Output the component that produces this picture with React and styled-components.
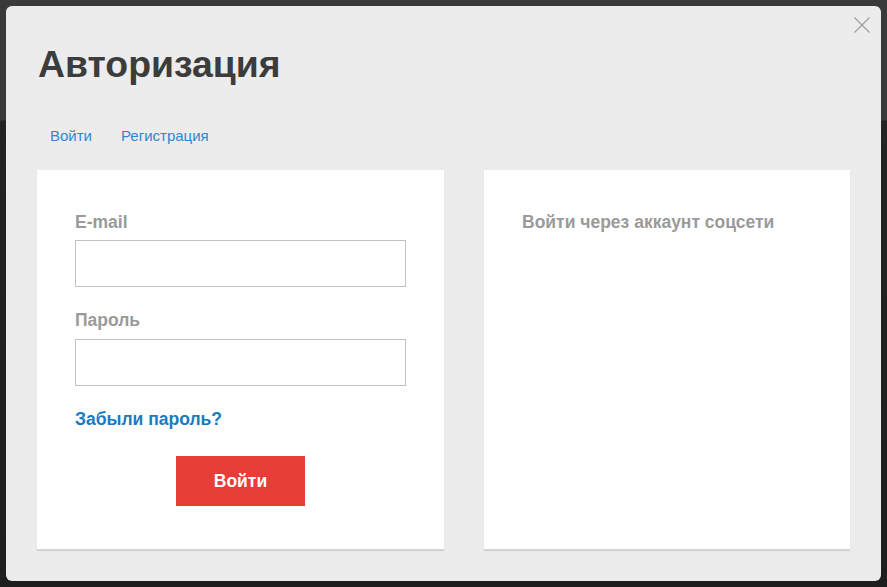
import React from "react";
import styled, { createGlobalStyle } from "styled-components";

const Global = createGlobalStyle`
  html, body { margin: 0; padding: 0; }
  body { font-family: "Liberation Sans", Arial, sans-serif; }
  * { box-sizing: border-box; }
`;

const Backdrop = styled.div`
  width: 887px;
  height: 587px;
  padding: 6px;
  background: linear-gradient(
    to bottom,
    #3a3a3a 0px,
    #3a3a3a 120px,
    #232323 121px,
    #1e1e1e 100%
  );
  overflow: hidden;
`;

const Modal = styled.div`
  position: relative;
  width: 875px;
  height: 575px;
  background: #ececec;
  border-radius: 6px;
  padding: 38px 31px 32px;
  display: flex;
  flex-direction: column;
`;

const Close = styled.button`
  position: absolute;
  top: 4px;
  right: 4px;
  width: 30px;
  height: 30px;
  border: 0;
  padding: 0;
  background: transparent;
  display: flex;
  align-items: center;
  justify-content: center;
  cursor: pointer;
`;

const Title = styled.h1`
  margin: 0 0 0 1px;
  font-size: 37.4px;
  line-height: 40px;
  font-weight: 700;
  color: #3c3c3c;
`;

const Tabs = styled.nav`
  display: flex;
  gap: 29px;
  margin: 43px 0 25px 13px;
`;

const Tab = styled.a`
  font-size: 15px;
  line-height: 18px;
  color: #2f87d1;
  text-decoration: none;
  cursor: pointer;
`;

const Cards = styled.div`
  display: flex;
  gap: 40px;
  align-items: stretch;
`;

const Card = styled.div`
  width: ${(p) => p.$w}px;
  background: #fff;
  box-shadow: 0 2px 1px rgba(0, 0, 0, 0.1);
  padding: 42px 38px 43px;
  display: flex;
  flex-direction: column;
`;

const Label = styled.label`
  font-size: 17.5px;
  line-height: 20px;
  font-weight: 700;
  color: #9a9a9a;
  margin-bottom: ${(p) => p.$mb || 8}px;
`;

const Input = styled.input`
  width: 331px;
  height: 47px;
  border: 1px solid #c2c2c2;
  background: #fff;
  margin: 0;
  padding: 0 10px;
  font: inherit;
  font-size: 15px;
  outline: none;
  margin-bottom: ${(p) => p.$mb || 0}px;
`;

const Forgot = styled.a`
  font-size: 17.5px;
  line-height: 20px;
  font-weight: 700;
  color: #1a7ac2;
  text-decoration: none;
  margin-bottom: 27px;
  align-self: flex-start;
`;

const Submit = styled.button`
  align-self: center;
  width: 129px;
  height: 50px;
  border: 0;
  background: #e83c38;
  color: #fff;
  font-family: inherit;
  font-size: 17.5px;
  font-weight: 700;
  cursor: pointer;
`;

const SocialTitle = styled.div`
  font-size: 17.5px;
  line-height: 20px;
  font-weight: 700;
  color: #9a9a9a;
`;

export default function App() {
  return (
    <>
      <Global />
      <Backdrop>
        <Modal>
          <Close aria-label="Закрыть">
            <svg width="16" height="16" viewBox="0 0 16 16">
              <path d="M0.5 0.5 L15.5 15.5 M15.5 0.5 L0.5 15.5" stroke="#9c9c9c" strokeWidth="1.1" fill="none" />
            </svg>
          </Close>
          <Title>Авторизация</Title>
          <Tabs>
            <Tab>Войти</Tab>
            <Tab>Регистрация</Tab>
          </Tabs>
          <Cards>
            <Card $w={407}>
              <Label>E-mail</Label>
              <Input type="text" $mb={23} />
              <Label $mb={9}>Пароль</Label>
              <Input type="password" $mb={23} />
              <Forgot>Забыли пароль?</Forgot>
              <Submit>Войти</Submit>
            </Card>
            <Card $w={366}>
              <SocialTitle>Войти через аккаунт соцсети</SocialTitle>
            </Card>
          </Cards>
        </Modal>
      </Backdrop>
    </>
  );
}
